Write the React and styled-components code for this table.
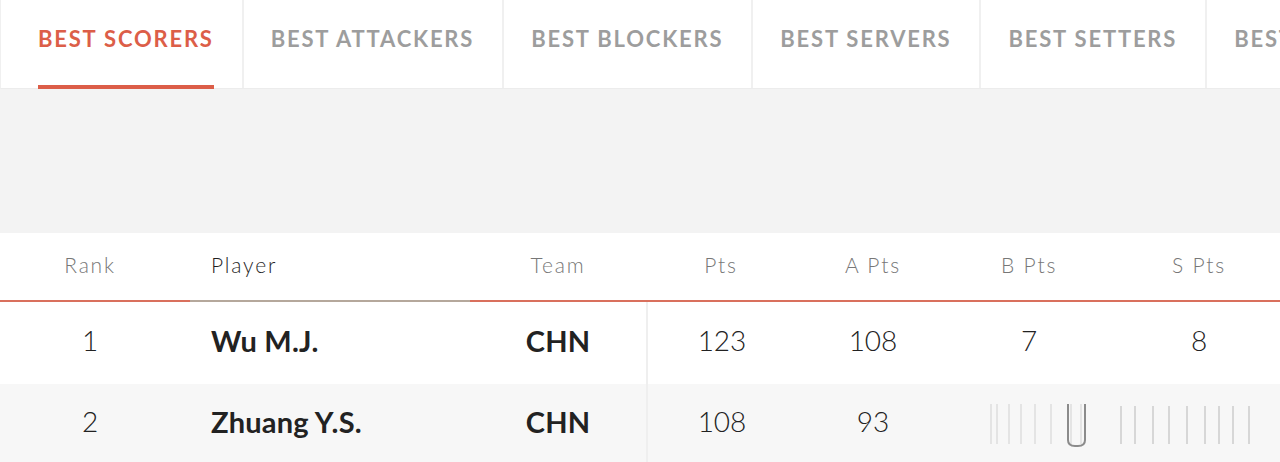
import React from "react";
import styled, { createGlobalStyle } from "styled-components";

const GlobalStyle = createGlobalStyle`
  html, body {
    margin: 0;
    padding: 0;
    background: #fff;
    overflow: hidden;
  }
  body {
    font-family: Lato, "Open Sans", Arial, sans-serif;
  }
`;

const Page = styled.div`
  width: 1280px;
  height: 462px;
  overflow: hidden;
  background: #fff;
`;

const TabBar = styled.div`
  display: flex;
  height: 88px;
  padding-left: 10px;
  background: #fff;
  border-left: 1px solid #f0f0f0;
  border-bottom: 1px solid #ececec;
  white-space: nowrap;
`;

const Tab = styled.div`
  position: relative;
  display: flex;
  align-items: center;
  flex-shrink: 0;
  padding: 0 28px 12px 27px;
  border-right: 2px solid #f0f0f0;
  font-size: 22px;
  font-weight: 700;
  letter-spacing: 1.8px;
  color: ${(p) => (p.active ? "#dc5e48" : "#9d9d9d")};

  &::after {
    content: "";
    display: ${(p) => (p.active ? "block" : "none")};
    position: absolute;
    left: 27px;
    right: 28px;
    bottom: -1px;
    height: 4px;
    background: #dc5e48;
  }
`;

const Band = styled.div`
  height: 144px;
  background: #f3f3f3;
`;

const Table = styled.div`
  width: 1290px;
`;

const columns = "190px 280px 176px 150px 154px 158px 182px";

const HeadRow = styled.div`
  display: grid;
  grid-template-columns: ${columns};
  height: 69px;
  background: #fff;
`;

const HeadCell = styled.div`
  display: flex;
  align-items: center;
  justify-content: ${(p) => (p.left ? "flex-start" : "center")};
  padding-left: ${(p) => (p.left ? "21px" : "0")};
  padding-right: ${(p) => (p.rank ? "10px" : "0")};
  padding-bottom: 4px;
  border-bottom: 2px solid ${(p) => (p.muted ? "#b5a89c" : "#d9705d")};
  font-size: 21px;
  font-weight: 300;
  letter-spacing: 1.8px;
  color: ${(p) => (p.dark ? "#1f1f1f" : "#777")};
`;

const Row = styled.div`
  display: grid;
  grid-template-columns: ${columns};
  height: ${(p) => p.h}px;
  background: ${(p) => (p.alt ? "#f7f7f7" : "#fff")};
`;

const Cell = styled.div`
  position: relative;
  display: flex;
  align-items: center;
  justify-content: ${(p) => (p.left ? "flex-start" : "center")};
  padding-left: ${(p) => (p.left ? "21px" : "0")};
  padding-right: ${(p) => (p.rank ? "10px" : "0")};
  padding-bottom: 6px;
  border-left: ${(p) => (p.divide ? "2px solid #efefef" : "none")};
  font-size: ${(p) => (p.bold ? "29px" : "28px")};
  font-weight: ${(p) => (p.bold ? 700 : 300)};
  letter-spacing: ${(p) => (p.bold ? "0.2px" : "0")};
  color: #222;
`;

const Glitch = styled.svg`
  position: absolute;
  top: 18px;
  left: 0;
`;

const tabs = [
  "BEST SCORERS",
  "BEST ATTACKERS",
  "BEST BLOCKERS",
  "BEST SERVERS",
  "BEST SETTERS",
  "BEST RECEIVERS",
];

const rows = [
  { rank: 1, name: "Wu M.J.", team: "CHN", pts: 123, a: 108, b: 7, s: 8 },
  { rank: 2, name: "Zhuang Y.S.", team: "CHN", pts: 108, a: 93, b: "", s: "" },
];

const leftLines = [40, 46, 58, 70, 84, 100, 120, 130];
const rightLines = [12, 26, 44, 60, 78, 96, 110, 124, 140];

function App() {
  return (
    <Page>
      <GlobalStyle />
      <TabBar>
        {tabs.map((t, i) => (
          <Tab key={t} active={i === 0}>
            {t}
          </Tab>
        ))}
      </TabBar>
      <Band />
      <Table>
        <HeadRow>
          <HeadCell rank>Rank</HeadCell>
          <HeadCell left dark muted>
            Player
          </HeadCell>
          <HeadCell>Team</HeadCell>
          <HeadCell>Pts</HeadCell>
          <HeadCell>A Pts</HeadCell>
          <HeadCell>B Pts</HeadCell>
          <HeadCell>S Pts</HeadCell>
        </HeadRow>
        {rows.map((r, i) => (
          <Row key={r.rank} alt={i % 2 === 1} h={i === 0 ? 82 : 80}>
            <Cell rank>{r.rank}</Cell>
            <Cell left bold>
              {r.name}
            </Cell>
            <Cell bold>{r.team}</Cell>
            <Cell divide>{r.pts}</Cell>
            <Cell>{r.a}</Cell>
            <Cell>
              {r.b}
              {i === 1 && (
                <Glitch width="158" height="48">
                  {leftLines.map((x) => (
                    <rect key={x} x={x} y="2" width="2" height="40" fill="#d6d6d6" opacity="0.55" />
                  ))}
                  <path d="M 118 2 L 118 38 Q 118 44 125 44 L 128 44 Q 135 44 135 38 L 135 2" fill="none" stroke="#333" strokeWidth="2" opacity="0.55" />
                </Glitch>
              )}
            </Cell>
            <Cell>
              {r.s}
              {i === 1 && (
                <Glitch width="182" height="48">
                  {rightLines.map((x) => (
                    <rect key={x} x={x} y="4" width="2" height="38" fill="#bdbdbd" opacity="0.55" />
                  ))}
                </Glitch>
              )}
            </Cell>
          </Row>
        ))}
      </Table>
    </Page>
  );
}

export default App;
